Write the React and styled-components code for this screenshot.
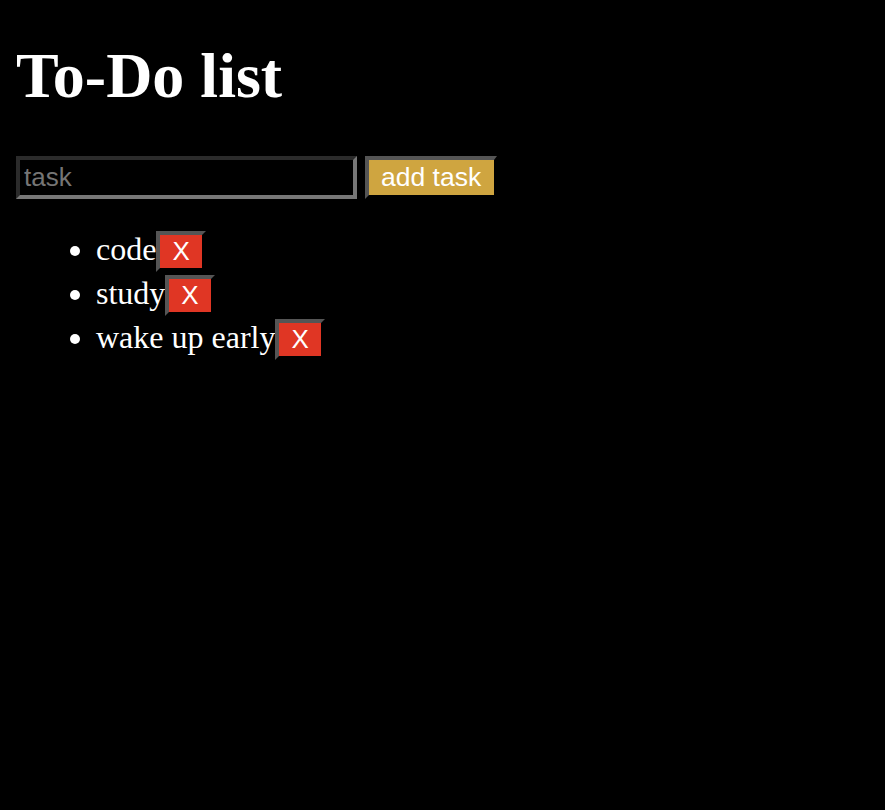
import React from "react";
import styled, { createGlobalStyle } from "styled-components";

const GlobalStyle = createGlobalStyle`
  html, body {
    margin: 0;
    background: #000;
    min-height: 100%;
  }
  body {
    font-family: "Liberation Serif", "Times New Roman", serif;
    color: #fff;
  }
`;

const tasks = ["code", "study", "wake up early"];

class App extends React.Component {
  constructor(props) {
    super(props);
    this.state = {
      tasks: tasks,
      newTask: ""
    };
    this.handleChange = this.handleChange.bind(this);
    this.addTask = this.addTask.bind(this);
  }

  handleChange(e) {
    this.setState({ newTask: e.target.value });
  }

  addTask() {
    if (!this.state.newTask.trim()) return;
    this.setState({
      tasks: [...this.state.tasks, this.state.newTask],
      newTask: ""
    });
  }

  deleteTask(index) {
    this.setState({
      tasks: this.state.tasks.filter((t, i) => i !== index)
    });
  }

  render() {
    return (
      <Page>
        <GlobalStyle />
        <Title>To-Do list</Title>
        <Form>
          <TaskInput
            placeholder="task"
            value={this.state.newTask}
            onChange={this.handleChange}
          />
          <AddButton onClick={this.addTask}>add task</AddButton>
        </Form>
        <TaskList>
          {this.state.tasks.map((task, i) => (
            <Task key={i}>
              {task}
              <DeleteButton onClick={() => this.deleteTask(i)}>X</DeleteButton>
            </Task>
          ))}
        </TaskList>
      </Page>
    );
  }
}

export default App;

const Page = styled.div`
  padding: 39px 16px;
  font-size: 32px;
`;

const Title = styled.h1`
  margin: 0 0 43px;
  font-size: 64px;
  font-weight: 700;
  line-height: 74px;
`;

const Form = styled.div`
  display: flex;
  gap: 8px;
`;

const TaskInput = styled.input`
  box-sizing: border-box;
  width: 341px;
  height: 43px;
  padding: 0 4px;
  background: #000;
  color: #fff;
  border: 4px solid;
  border-color: #2b2b2b #777 #777 #2b2b2b;
  font-family: "Liberation Sans", Arial, sans-serif;
  font-size: 26px;
  outline: none;

  &::placeholder {
    color: #757575;
  }
`;

const AddButton = styled.button`
  box-sizing: border-box;
  height: 43px;
  padding: 0 13px 0 12px;
  background: #cfa540;
  color: #fff;
  border: 4px solid;
  border-color: #555 #000 #000 #555;
  border-right-width: 3px;
  font-family: "Liberation Sans", Arial, sans-serif;
  font-size: 26.5px;
  cursor: pointer;
`;

const TaskList = styled.ul`
  margin: 29px 0 0;
  padding-left: 80px;
`;

const Task = styled.li`
  line-height: 43.4px;
`;

const DeleteButton = styled.button`
  box-sizing: border-box;
  height: 41px;
  padding: 0 12px;
  background: #e03624;
  color: #fff;
  border: 4px solid;
  border-color: #555 #000 #000 #555;
  font-family: "Liberation Sans", Arial, sans-serif;
  font-size: 26px;
  line-height: 33px;
  cursor: pointer;
`;
